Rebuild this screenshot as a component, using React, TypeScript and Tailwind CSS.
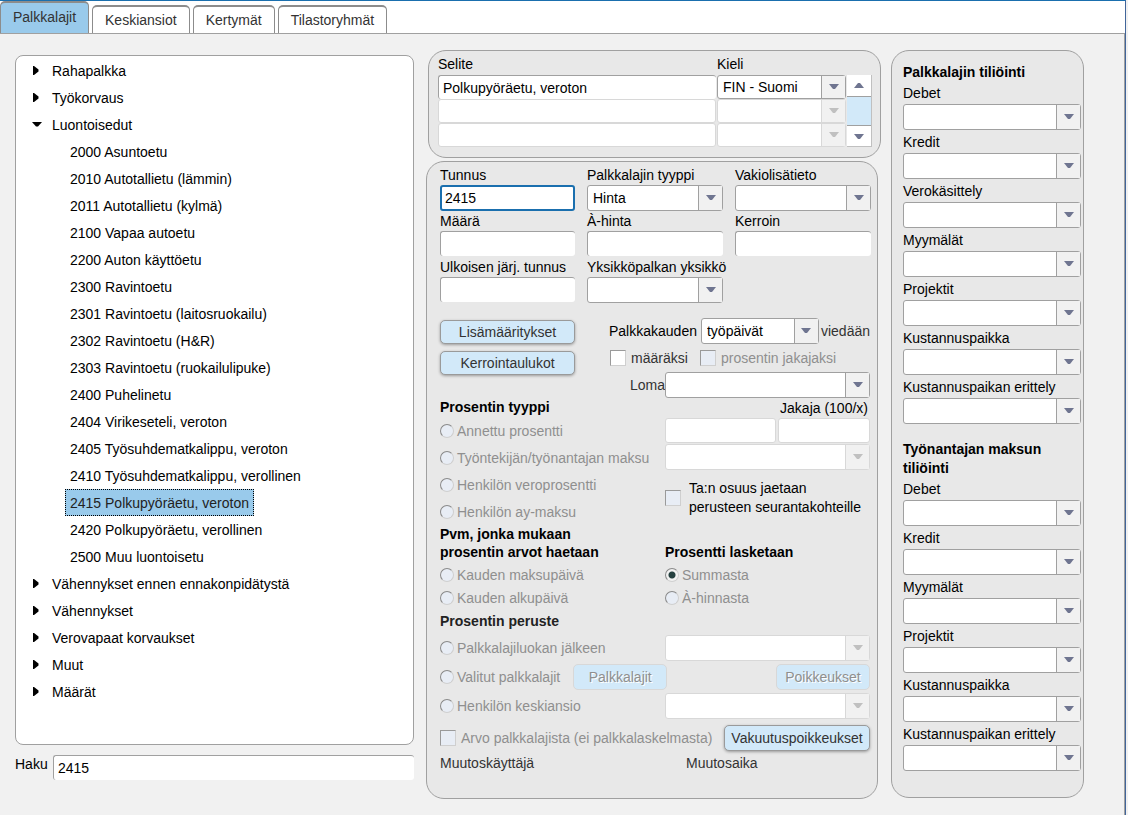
import React from 'react';
import clsx from 'clsx';

const TABS = ['Palkkalajit', 'Keskiansiot', 'Kertymät', 'Tilastoryhmät'];

interface TreeNode {
    label: string;
    children?: string[];
}

const TREE: TreeNode[] = [
    { label: 'Rahapalkka' },
    { label: 'Työkorvaus' },
    {
        label: 'Luontoisedut',
        children: [
            '2000 Asuntoetu',
            '2010 Autotallietu (lämmin)',
            '2011 Autotallietu (kylmä)',
            '2100 Vapaa autoetu',
            '2200 Auton käyttöetu',
            '2300 Ravintoetu',
            '2301 Ravintoetu (laitosruokailu)',
            '2302 Ravintoetu (H&R)',
            '2303 Ravintoetu (ruokailulipuke)',
            '2400 Puhelinetu',
            '2404 Virikeseteli, veroton',
            '2405 Työsuhdematkalippu, veroton',
            '2410 Työsuhdematkalippu, verollinen',
            '2415 Polkupyöräetu, veroton',
            '2420 Polkupyöräetu, verollinen',
            '2500 Muu luontoisetu',
        ],
    },
    { label: 'Vähennykset ennen ennakonpidätystä' },
    { label: 'Vähennykset' },
    { label: 'Verovapaat korvaukset' },
    { label: 'Muut' },
    { label: 'Määrät' },
];

const SELECTED = '2415 Polkupyöräetu, veroton';

const WAGE_ACCOUNTS = ['Debet', 'Kredit', 'Verokäsittely', 'Myymälät', 'Projektit', 'Kustannuspaikka', 'Kustannuspaikan erittely'];
const EMPLOYER_ACCOUNTS = ['Debet', 'Kredit', 'Myymälät', 'Projektit', 'Kustannuspaikka', 'Kustannuspaikan erittely'];

function App() {
    return (
        <div className="min-h-screen flex flex-col bg-[#f1f1f1] pr-0.5 font-['Liberation_Sans',Arial,sans-serif] text-sm text-black">
            <div className="flex-1 flex flex-col border-t border-t-[#1a6fae] border-r border-r-[#41659a]">
                <TabBar />
                <main className="flex-1 flex items-start border-r border-[#a0a0a0] bg-[#f1f1f1] pl-[15px] pr-10 pt-4 pb-[15px]">
                    <TreePanel />
                    <div className="w-[455px] shrink-0 ml-3 flex flex-col gap-[3px]">
                        <DescriptionPanel />
                        <DetailPanel />
                    </div>
                    <AccountPanel />
                </main>
            </div>
        </div>
    );
}

export default App;

function TabBar() {
    return (
        <nav className="h-[33px] flex items-end gap-[3px] border-b border-[#a0a0a0] bg-white">
            {TABS.map((tab, i) => (
                <button
                    key={tab}
                    type="button"
                    className={clsx(
                        'border-[#8c8c8c] border-x border-t-2 rounded-t-[5px] text-[#333]',
                        i === 0 ? 'h-8 px-3 pb-0.5 bg-[#99caeb]' : 'h-7 px-3 bg-white',
                    )}
                >
                    {tab}
                </button>
            ))}
        </nav>
    );
}

function TreePanel() {
    return (
        <section className="flex-1 min-w-0 pt-[5px]">
            <ul className="h-[690px] overflow-auto rounded-lg border border-[#a0a0a0] bg-white pl-4 pt-px">
                {TREE.map((node) => (
                    <li key={node.label}>
                        <button type="button" className="h-[27px] flex items-center">
                            <span className="w-5 flex">
                                <TreeArrow open={!!node.children} />
                            </span>
                            {node.label}
                        </button>
                        {node.children && (
                            <ul className="pl-[33px]">
                                {node.children.map((leaf) => (
                                    <li key={leaf} className="h-[27px] flex">
                                        <button
                                            type="button"
                                            className={clsx(
                                                'px-1 border border-dotted',
                                                leaf === SELECTED ? 'bg-[#99caeb] border-black text-[#222]' : 'border-transparent',
                                            )}
                                        >
                                            {leaf}
                                        </button>
                                    </li>
                                ))}
                            </ul>
                        )}
                    </li>
                ))}
            </ul>
            <div className="flex mt-2.5">
                <label htmlFor="haku" className="w-[38px] leading-[18px]">Haku</label>
                <TextBox id="haku" defaultValue="2415" className="flex-1" />
            </div>
        </section>
    );
}

function TreeArrow({ open }: { open: boolean }) {
    return (
        <svg viewBox="0 0 10 10" className="size-2.5" aria-hidden="true">
            <path d={open ? 'M0 2H10L6 6.5H4Z' : 'M1 0H2L6.5 3.5V5.5L2 9H1Z'} />
        </svg>
    );
}

function DescriptionPanel() {
    return (
        <section className="ml-0.5 rounded-[18px] border border-[#a0a0a0] bg-[#e8e8e8] pl-[9px] pr-2 pt-1 pb-2.5">
            <div className="flex leading-[18px] pb-0.5">
                <span className="flex-1">Selite</span>
                <span className="w-[155px]">Kieli</span>
            </div>
            <div className="flex">
                <div className="flex-1">
                    {[0, 1, 2].map((row) => (
                        <div key={row} className="flex h-6 gap-px">
                            <TextBox
                                aria-label={`Selite ${row + 1}`}
                                defaultValue={row === 0 ? 'Polkupyöräetu, veroton' : ''}
                                disabled={row > 0}
                                className="flex-1"
                            />
                            <SelectBox
                                label={`Kieli ${row + 1}`}
                                value={row === 0 ? 'FIN - Suomi' : ''}
                                disabled={row > 0}
                                className="w-[129px]"
                            />
                        </div>
                    ))}
                </div>
                <div className="ml-px w-[25px] flex flex-col border-r border-b border-[#c0c0c0] bg-white text-[#6f7590]">
                    <button type="button" aria-label="Ylös" className="h-[22px] flex items-center justify-center border-b border-[#a0a0a0]">
                        <Triangle up />
                    </button>
                    <div className="flex-1 bg-[#d2e9f9] border-b border-[#a0a0a0]" />
                    <button type="button" aria-label="Alas" className="h-5 flex items-center justify-center">
                        <Triangle />
                    </button>
                </div>
            </div>
        </section>
    );
}

function DetailPanel() {
    return (
        <section className="mr-[3px] rounded-[18px] border border-[#a0a0a0] bg-[#e8e8e8] pl-[13px] pr-[7px] pt-[3px] pb-7">
            <div className="grid grid-cols-[135px_136px_136px] gap-x-3">
                <Field id="tunnus" label="Tunnus">
                    <input
                        id="tunnus"
                        defaultValue="2415"
                        className="w-full h-[26px] px-[3px] rounded-[3px] border-2 border-[#1a6fae] bg-white outline-none"
                    />
                </Field>
                <Field id="tyyppi" label="Palkkalajin tyyppi">
                    <SelectBox id="tyyppi" value="Hinta" />
                </Field>
                <Field id="vakio" label="Vakiolisätieto">
                    <SelectBox id="vakio" />
                </Field>
                <Field id="maara" label="Määrä">
                    <TextBox id="maara" className="w-full" />
                </Field>
                <Field id="ahinta" label="À-hinta">
                    <TextBox id="ahinta" className="w-full" />
                </Field>
                <Field id="kerroin" label="Kerroin">
                    <TextBox id="kerroin" className="w-full" />
                </Field>
                <Field id="ulkoinen" label="Ulkoisen järj. tunnus">
                    <TextBox id="ulkoinen" className="w-full" />
                </Field>
                <Field id="yksikko" label="Yksikköpalkan yksikkö">
                    <SelectBox id="yksikko" />
                </Field>
            </div>

            <div className="flex justify-between mt-[15px]">
                <div className="w-[135px] flex flex-col gap-[7px] pt-0.5">
                    <PushButton className="h-6">Lisämääritykset</PushButton>
                    <PushButton className="h-6">Kerrointaulukot</PushButton>
                </div>
                <div className="flex flex-col items-end">
                    <div className="flex items-center">
                        <label htmlFor="kausi" className="mr-1">Palkkakauden</label>
                        <SelectBox id="kausi" value="työpäivät" className="w-[118px]" />
                        <span className="ml-0.5 text-[#333]">viedään</span>
                    </div>
                    <div className="h-7 w-[260px] flex items-center text-[#333]">
                        <label className="w-[90px] flex items-center gap-[5px]">
                            <CheckBox /> määräksi
                        </label>
                        <label className="flex items-center gap-[5px] text-[#8f8f8f]">
                            <CheckBox disabled /> prosentin jakajaksi
                        </label>
                    </div>
                    <div className="flex items-center">
                        <label htmlFor="loma" className="text-[#333]">Loma</label>
                        <SelectBox id="loma" className="w-[205px]" />
                    </div>
                </div>
            </div>

            <div className="grid grid-cols-[225px_205px]">
                <h2 className="h-[19px] leading-[18px] font-bold">Prosentin tyyppi</h2>
                <label htmlFor="jakaja" className="h-[19px] leading-5 pr-0.5 text-right">Jakaja (100/x)</label>

                <RadioRow name="prosentti" label="Annettu prosentti" />
                <div className="flex items-center gap-0.5">
                    <TextBox aria-label="Prosentti" disabled className="w-[111px]" />
                    <TextBox id="jakaja" disabled className="w-[92px]" />
                </div>
                <RadioRow name="prosentti" label="Työntekijän/työnantajan maksu" />
                <SelectBox label="Maksu" disabled />
                <div>
                    <RadioRow name="prosentti" label="Henkilön veroprosentti" />
                    <RadioRow name="prosentti" label="Henkilön ay-maksu" />
                </div>
                <label className="flex items-center gap-2 leading-[19px]">
                    <CheckBox disabled />
                    <span className="whitespace-nowrap">Ta:n osuus jaetaan<br />perusteen seurantakohteille</span>
                </label>

                <h2 className="h-[38px] leading-[18px] font-bold">Pvm, jonka mukaan<br />prosentin arvot haetaan</h2>
                <h2 className="h-[38px] leading-[18px] pt-[18px] font-bold">Prosentti lasketaan</h2>
                <RadioRow name="pvm" label="Kauden maksupäivä" dense />
                <RadioRow name="laskenta" label="Summasta" dense checked />
                <RadioRow name="pvm" label="Kauden alkupäivä" dense />
                <RadioRow name="laskenta" label="À-hinnasta" dense />
            </div>

            <h2 className="leading-6 font-bold text-[#222]">Prosentin peruste</h2>
            <BasisRow label="Palkkalajiluokan jälkeen">
                <SelectBox label="Palkkalajiluokka" disabled className="w-[205px]" />
            </BasisRow>
            <BasisRow label="Valitut palkkalajit">
                <div className="flex-1 flex justify-between pl-[13px]">
                    <PushButton disabled className="h-[26px] w-[94px]">Palkkalajit</PushButton>
                    <PushButton disabled className="h-[26px] w-[94px]">Poikkeukset</PushButton>
                </div>
            </BasisRow>
            <BasisRow label="Henkilön keskiansio">
                <SelectBox label="Keskiansio" disabled className="w-[205px]" />
            </BasisRow>

            <div className="h-9 flex items-center justify-between">
                <label className="flex items-center gap-[5px] whitespace-nowrap text-[#8f8f8f]">
                    <CheckBox disabled /> Arvo palkkalajista (ei palkkalaskelmasta)
                </label>
                <PushButton className="h-[26px] w-[146px]">Vakuutuspoikkeukset</PushButton>
            </div>
            <div className="flex leading-[14px] text-[#333]">
                <span className="w-[246px]">Muutoskäyttäjä</span>
                <span>Muutosaika</span>
            </div>
        </section>
    );
}

function AccountPanel() {
    return (
        <section className="w-[193px] shrink-0 ml-2.5 rounded-[18px] border border-[#a0a0a0] bg-[#e8e8e8] pl-[11px] pr-0.5 pt-3 pb-[25px]">
            <h2 className="leading-[19px] font-bold">Palkkalajin tiliöinti</h2>
            <AccountFields prefix="palkka" labels={WAGE_ACCOUNTS} />
            <h2 className="w-40 mt-[15px] leading-[19px] font-bold">Työnantajan maksun tiliöinti</h2>
            <AccountFields prefix="maksu" labels={EMPLOYER_ACCOUNTS} />
        </section>
    );
}

function AccountFields({ prefix, labels }: { prefix: string; labels: string[] }) {
    return (
        <>
            {labels.map((label) => {
                const id = `${prefix}-${label}`;
                return (
                    <div key={id} className="flex flex-col pb-px">
                        <label htmlFor={id} className="leading-[22px]">{label}</label>
                        <SelectBox id={id} />
                    </div>
                );
            })}
        </>
    );
}

function Field({ id, label, children }: { id: string; label: string; children: React.ReactNode }) {
    return (
        <div className="h-[46px]">
            <label htmlFor={id} className="block leading-5 whitespace-nowrap">{label}</label>
            {children}
        </div>
    );
}

function TextBox({ className, ...props }: React.ComponentProps<'input'>) {
    return (
        <input
            {...props}
            className={clsx(
                'min-w-0 max-h-full h-[25px] px-1 rounded-[3px] bg-white',
                props.disabled ? 'border border-[#d8d8d8]' : 'border-t border-l border-[#a0a0a0]',
                className,
            )}
        />
    );
}

interface SelectBoxProps {
    id?: string;
    label?: string;
    value?: string;
    disabled?: boolean;
    className?: string;
}

function SelectBox({ id, label, value = '', disabled, className }: SelectBoxProps) {
    return (
        <div className={clsx('relative max-h-full h-[26px]', className)}>
            <select
                id={id}
                aria-label={label}
                disabled={disabled}
                defaultValue={value}
                className={clsx(
                    'block appearance-none w-full h-full pl-[5px] pr-7 rounded-[3px] border bg-white opacity-100',
                    disabled ? 'border-[#d8d8d8]' : 'border-[#a0a0a0]',
                )}
            >
                <option value={value}>{value}</option>
            </select>
            <span
                className={clsx(
                    'pointer-events-none absolute inset-y-px right-px w-6 flex items-center justify-center border-l bg-[#f1f1f1] pb-px',
                    disabled ? 'border-[#d8d8d8] text-[#c0c0c0]' : 'border-[#a0a0a0] text-[#6f7590]',
                )}
            >
                <Triangle />
            </span>
        </div>
    );
}

function Triangle({ up }: { up?: boolean }) {
    return (
        <svg viewBox="0 0 10 5" className="w-2.5 h-[5px]" fill="currentColor" aria-hidden="true">
            <path d={up ? 'M0 5L4 0H6L10 5Z' : 'M0 0H10L6 5H4Z'} />
        </svg>
    );
}

function PushButton({ className, disabled, children }: React.ComponentProps<'button'>) {
    return (
        <button
            type="button"
            disabled={disabled}
            className={clsx(
                'shrink-0 rounded-[5px] border bg-[#d2e9f9] whitespace-nowrap leading-5',
                disabled
                    ? 'border-[#d8d8d8] text-[#8f8f8f] text-shadow-[1px_1px_0_#ffffff]'
                    : 'border-[#9a9a9a] text-[#333] shadow-[0_1px_3px_#00000055]',
                className,
            )}
        >
            {children}
        </button>
    );
}

function CheckBox({ disabled }: { disabled?: boolean }) {
    return (
        <input
            type="checkbox"
            disabled={disabled}
            className={clsx(
                'appearance-none shrink-0 size-4 border border-t-[#9a9a9a] border-l-[#9a9a9a] border-r-[#cfcfcf] border-b-[#cfcfcf]',
                disabled ? 'bg-[#e8edf5]' : 'bg-white',
            )}
        />
    );
}

interface RadioRowProps {
    name: string;
    label: string;
    dense?: boolean;
    checked?: boolean;
}

function RadioRow({ name, label, dense, checked }: RadioRowProps) {
    return (
        <label className={clsx('flex items-center gap-[3px] whitespace-nowrap text-[#8f8f8f]', dense ? 'h-[23px]' : 'h-[27px]')}>
            <input
                type="radio"
                name={name}
                disabled
                defaultChecked={checked}
                className="appearance-none shrink-0 size-3.5 rounded-full border border-t-[#8a8a8a] border-l-[#8a8a8a] border-r-[#cfcfcf] border-b-[#cfcfcf] bg-[#e8edf5] checked:bg-[radial-gradient(circle,#24403f_3px,#f1f1f1_4px)]"
            />
            {label}
        </label>
    );
}

function BasisRow({ label, children }: { label: string; children: React.ReactNode }) {
    return (
        <div className="h-[29px] w-[430px] flex items-center justify-between">
            <RadioRow name="peruste" label={label} />
            {children}
        </div>
    );
}
